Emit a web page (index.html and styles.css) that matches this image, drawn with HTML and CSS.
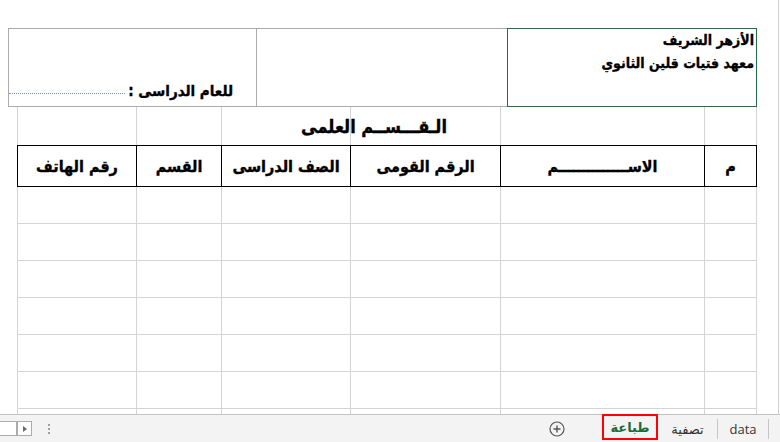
FILE: index.html
```html
<!DOCTYPE html>
<html lang="ar">
<head>
<meta charset="utf-8">
<title>Sheet</title>
<link rel="stylesheet" href="styles.css">
</head>
<body>
<div class="sheet">
  <div class="top-gap"></div>
  <div class="head">
    <div class="box box-year">
      <span class="year">للعام الدراسى :</span>
      <span class="dots"></span>
    </div>
    <div class="box box-mid"></div>
    <div class="box box-school">
      <div class="school-line">الأزهر الشريف</div>
      <div class="school-line">معهد فتيات قلين الثانوي</div>
    </div>
  </div>
  <div class="grid">
    <div class="c t"></div>
    <div class="c t"></div>
    <div class="c t title-cell"><span class="title">الـقـــســم العلمى</span></div>
    <div class="c t"></div>
    <div class="c t"></div>
    <div class="c t"></div>

    <div class="c h">م</div>
    <div class="c h">الاســــــــــــــم</div>
    <div class="c h">الرقم القومى</div>
    <div class="c h">الصف الدراسى</div>
    <div class="c h">القسم</div>
    <div class="c h">رقم الهاتف</div>

    <div class="c d"></div><div class="c d"></div><div class="c d"></div><div class="c d"></div><div class="c d"></div><div class="c d"></div>
    <div class="c d"></div><div class="c d"></div><div class="c d"></div><div class="c d"></div><div class="c d"></div><div class="c d"></div>
    <div class="c d"></div><div class="c d"></div><div class="c d"></div><div class="c d"></div><div class="c d"></div><div class="c d"></div>
    <div class="c d"></div><div class="c d"></div><div class="c d"></div><div class="c d"></div><div class="c d"></div><div class="c d"></div>
    <div class="c d"></div><div class="c d"></div><div class="c d"></div><div class="c d"></div><div class="c d"></div><div class="c d"></div>
    <div class="c d"></div><div class="c d"></div><div class="c d"></div><div class="c d"></div><div class="c d"></div><div class="c d"></div>
    <div class="c d"></div><div class="c d"></div><div class="c d"></div><div class="c d"></div><div class="c d"></div><div class="c d"></div>
  </div>
</div>
<div class="tabbar">
  <div class="nav">
    <span class="nav-box nav-prev"></span>
    <span class="nav-box nav-next"><span class="tri"></span></span>
    <span class="vdots"><i></i><i></i><i></i></span>
  </div>
  <div class="tabs">
    <span class="add">
      <svg width="16" height="16" viewBox="0 0 16 16"><circle cx="8" cy="8" r="7" fill="none" stroke="#555" stroke-width="1.2"/><path d="M8 4.5v7M4.5 8h7" stroke="#555" stroke-width="1.4"/></svg>
    </span>
    <span class="tab active">طباعة</span>
    <span class="tab tab-filter">تصفية</span>
    <span class="sep"></span>
    <span class="tab tab-data">data</span>
    <span class="sep"></span>
  </div>
</div>
</body>
</html>
```
FILE: styles.css
```css
html, body {
  margin: 0;
  padding: 0;
}
body {
  width: 780px;
  height: 442px;
  overflow: hidden;
  background: #fff;
  font-family: "DejaVu Sans", "Noto Sans", sans-serif;
  color: #000;
}
.sheet {
  box-sizing: border-box;
  width: 779px;
  height: 414px;
  overflow: hidden;
  border-right: 1px solid #d0d0d0;
}
.top-gap {
  height: 28px;
}
.head {
  display: flex;
  margin-left: 8px;
  height: 79px;
}
.box {
  box-sizing: border-box;
  height: 79px;
  border-top: 1px solid #ababab;
  border-bottom: 1px solid #ababab;
  border-left: 1px solid #ababab;
}
.box-year {
  width: 248px;
  display: flex;
  direction: rtl;
  align-items: flex-end;
  padding: 0 23px 6px 0;
}
.year,
.school-line,
.title,
.h {
  font-family: "DejaVu Sans", sans-serif;
  font-stretch: condensed;
  font-weight: bold;
  -webkit-text-stroke: 0.35px #000;
}
.year {
  font-size: 15px;
  line-height: 18px;
  white-space: nowrap;
}
.dots {
  flex: 1;
  border-bottom: 1px dotted #7d92b0;
  margin: 0 3px 6px 0;
}
.box-mid {
  width: 251px;
}
.box-school {
  width: 250px;
  border: 1px solid #217346;
  direction: rtl;
  padding: 0 2px 0 0;
}
.school-line {
  font-size: 14px;
  line-height: 23px;
  white-space: nowrap;
}
.grid {
  margin-left: 17px;
  width: 740px;
  display: grid;
  direction: rtl;
  grid-template-columns: 53px 204px 150px 129px 85px 119px;
}
.c {
  box-sizing: border-box;
  border-left: 1px solid #d4d4d4;
  border-bottom: 1px solid #d4d4d4;
}
.c:nth-child(6n+1) {
  border-right: 1px solid #d4d4d4;
}
.t {
  height: 38px;
  border-bottom: none;
}
.title-cell {
  display: flex;
  align-items: flex-end;
  padding: 0 53px 6px 0;
  white-space: nowrap;
}
.title {
  font-size: 18px;
  line-height: 24px;
}
.h {
  height: 42px;
  border-top: 1px solid #000;
  border-bottom: 1px solid #000;
  border-left: 1px solid #000;
  display: flex;
  align-items: center;
  justify-content: center;
  font-size: 16px;
  white-space: nowrap;
}
.h:nth-child(6n+1) {
  border-right: 1px solid #000;
}
.d {
  height: 37px;
}
.tabbar {
  box-sizing: border-box;
  height: 28px;
  background: #f3f3f3;
  border-top: 1px solid #c3c3c3;
  display: flex;
  align-items: center;
  font-family: "Open Sans", "DejaVu Sans", sans-serif;
}
.nav {
  display: flex;
  align-items: center;
}
.nav-box {
  box-sizing: border-box;
  height: 15px;
  border: 1px solid #ababab;
  background: #fff;
  display: flex;
  align-items: center;
  justify-content: center;
}
.nav-prev {
  width: 17px;
  border-left: none;
}
.nav-next {
  width: 15px;
}
.tri {
  width: 0;
  height: 0;
  border-top: 3.5px solid transparent;
  border-bottom: 3.5px solid transparent;
  border-left: 4px solid #6a6a6a;
}
.vdots {
  display: flex;
  flex-direction: column;
  gap: 2px;
  margin-left: 16px;
}
.vdots i {
  display: block;
  width: 2px;
  height: 2px;
  background: #a0a0a0;
}
.tabs {
  margin-left: auto;
  display: flex;
  align-items: center;
  height: 100%;
}
.add {
  width: 16px;
  height: 16px;
  margin-right: 37px;
  display: flex;
}
.tab {
  font-size: 13px;
  color: #333;
  text-align: center;
  white-space: nowrap;
}
.active {
  box-sizing: border-box;
  width: 56px;
  height: 26px;
  align-self: flex-start;
  margin-top: -1px;
  border: 2px solid #ff0000;
  color: #1d6b3a;
  font-weight: bold;
  line-height: 22px;
}
.tab-filter {
  width: 59px;
}
.tab-data {
  width: 50px;
}
.sep {
  width: 1px;
  height: 20px;
  background: #c6c6c6;
}
.sep:last-child {
  margin-right: 11px;
}
```
